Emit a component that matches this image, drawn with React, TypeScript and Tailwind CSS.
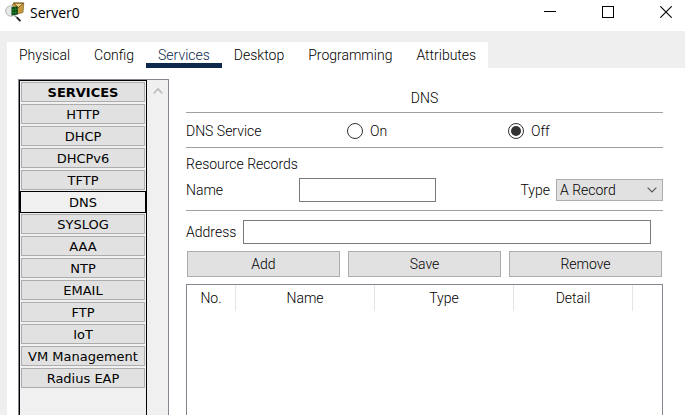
import React from "react";

const tabs = ["Physical", "Config", "Services", "Desktop", "Programming", "Attributes"];

const services = [
  "HTTP", "DHCP", "DHCPv6", "TFTP", "DNS", "SYSLOG", "AAA", "NTP",
  "EMAIL", "FTP", "IoT", "VM Management", "Radius EAP",
];

function AppIcon() {
  return (
    <svg width="20" height="20" viewBox="0 0 20 20" aria-hidden="true">
      <path d="M7 3 L9 0.8 L18.8 1 L18 10.5 L12 12 Z" fill="#c99b3c" stroke="#6e5118" strokeWidth="0.6" />
      <path d="M8.6 1.2 L13.5 5.5 L18.6 1.2 Z" fill="#f0d38a" stroke="#5d430f" strokeWidth="0.8" />
      <circle cx="5.8" cy="9" r="5.2" fill="#e4e8e4" stroke="#b4b8b4" strokeWidth="1" />
      <path d="M6.5 5 L12.8 4.5 V12.5 L6.5 13.5 Z" fill="#0b3d13" />
      <path d="M8.2 5.5 V13 M10.6 5 V12.5 M6.5 8 L12.5 7 M6.5 11 L12.5 10" stroke="#1d8a2b" strokeWidth="0.7" />
      <path d="M9.5 13.5 L12 15.5" stroke="#888" strokeWidth="1.4" />
      <path d="M11.8 15.3 L15.4 19.2" stroke="#222" strokeWidth="1.9" />
    </svg>
  );
}

function TitleBar() {
  return (
    <header className="flex h-[31px] items-start bg-white pl-[5px]">
      <div className="flex h-6 flex-1 items-center gap-[5px]">
        <AppIcon />
        <h1 className="pt-0.5 font-['Open_Sans',sans-serif] text-sm leading-4 font-normal">Server0</h1>
      </div>
      <div className="flex h-6 gap-5">
        <button type="button" aria-label="Minimize" className="flex w-[38px] items-center justify-center">
          <svg width="12" height="12" aria-hidden="true"><path d="M0 5.5H12" stroke="#000" /></svg>
        </button>
        <button type="button" aria-label="Maximize" className="flex w-[38px] items-center justify-center">
          <svg width="12" height="12" aria-hidden="true"><rect x=".5" y=".5" width="11" height="11" fill="none" stroke="#000" /></svg>
        </button>
        <button type="button" aria-label="Close" className="flex w-[38px] items-center justify-center">
          <svg width="12" height="12" aria-hidden="true"><path d="M.3 .3L11.7 11.7M11.7 .3L.3 11.7" stroke="#000" strokeWidth="1.1" /></svg>
        </button>
      </div>
    </header>
  );
}

function TabBar() {
  return (
    <div className="flex bg-[#efefef] pt-[11px]">
      <nav role="tablist" className="flex h-[26px] bg-white">
        {tabs.map((tab) => (
          <button
            key={tab}
            type="button"
            role="tab"
            aria-selected={tab === "Services"}
            className={
              tab === "Services"
                ? "border-b-5 border-[#0d274d] px-3 pt-1 leading-4 text-[#0d274d]"
                : "border-b-5 border-white px-3 pt-1 leading-4"
            }
          >
            {tab}
          </button>
        ))}
      </nav>
    </div>
  );
}

function ServiceList() {
  return (
    <aside className="flex w-[151px] border border-b-0 border-[#828790] bg-[#f0f0f0] font-['DejaVu_Sans',sans-serif] text-[13px] font-normal">
      <div className="flex w-[128px] flex-col border border-b-0 border-black">
        <h2 className="mx-px mt-px h-5 border border-[#adadad] bg-[#e1e1e1] text-center leading-[19px] font-bold">
          SERVICES
        </h2>
        {services.map((name) =>
          name === "DNS" ? (
            <button key={name} type="button" aria-pressed="true" className="mt-px h-[22px] border border-black leading-[22px]">
              {name}
            </button>
          ) : (
            <button
              key={name}
              type="button"
              className="mx-px mt-0.5 h-5 border border-[#adadad] bg-[#e1e1e1] leading-[19px] [[aria-pressed]+&]:mt-px"
            >
              {name}
            </button>
          ),
        )}
      </div>
      <div className="flex flex-1 justify-center pt-[7px]">
        <svg width="10" height="8" aria-hidden="true">
          <path d="M.7 6.5L5 1.8L9.3 6.5" fill="none" stroke="#bfbfbf" strokeWidth="1.8" />
        </svg>
      </div>
    </aside>
  );
}

function Radio({ id, label, checked }: { id: string; label: string; checked?: boolean }) {
  return (
    <div className="flex items-center gap-[7px]">
      <input
        id={id}
        type="radio"
        name="dns-service"
        defaultChecked={checked}
        className="size-4 appearance-none rounded-full border border-[#333] bg-white bg-clip-content p-0.5 checked:bg-[#333]"
      />
      <label htmlFor={id}>{label}</label>
    </div>
  );
}

function DnsPanel() {
  return (
    <main className="mr-[22px] flex min-w-0 flex-1 flex-col">
      <h2 className="h-[34px] border-b border-[#a0a0a0] pt-[11px] text-center leading-4">DNS</h2>
      <div role="radiogroup" aria-labelledby="svc" className="grid h-[35px] grid-cols-3 items-center gap-2 border-b border-[#a0a0a0] pt-px pr-0.5">
        <span id="svc">DNS Service</span>
        <Radio id="on" label="On" />
        <Radio id="off" label="Off" checked />
      </div>
      <div className="border-b border-[#a0a0a0] pb-2">
        <h3 className="pt-2 leading-4">Resource Records</h3>
        <div className="mt-1.5 flex h-6 items-center">
          <label htmlFor="name" className="w-[113px]">Name</label>
          <input id="name" type="text" className="h-6 w-[137px] border border-[#7a7a7a] bg-white px-1 outline-none" />
          <label htmlFor="type" className="mr-1.5 ml-auto">Type</label>
          <div className="grid w-[107px] items-center">
            <select id="type" className="col-start-1 row-start-1 h-[22px] appearance-none border border-[#adadad] bg-[#e1e1e1] pl-[3px] outline-none">
              <option>A Record</option>
              <option>CNAME</option>
              <option>SOA</option>
              <option>NS Record</option>
            </select>
            <svg width="10" height="6" aria-hidden="true" className="pointer-events-none col-start-1 row-start-1 mr-1.5 justify-self-end">
              <path d="M.6 .6L5 5L9.4 .6" fill="none" stroke="#555" strokeWidth="1.1" />
            </svg>
          </div>
        </div>
      </div>
      <div className="mt-[9px] mr-3 flex items-center">
        <label htmlFor="address" className="w-[57px]">Address</label>
        <input id="address" type="text" className="h-6 min-w-0 flex-1 border border-[#7a7a7a] bg-white px-1 outline-none" />
      </div>
      <div className="mt-[7px] grid grid-cols-3 gap-2 px-px">
        {["Add", "Save", "Remove"].map((action) => (
          <button key={action} type="button" className="h-[26px] border border-[#adadad] bg-[#e1e1e1] leading-6">
            {action}
          </button>
        ))}
      </div>
      <div className="mt-[7px] flex-1 border border-b-0 border-[#828790]">
        <table className="w-full table-fixed border-separate border-spacing-0">
          <thead>
            <tr className="h-[26px] *:border-r *:border-[#e5e5e5] *:p-0 *:font-light">
              <th scope="col" className="w-[49px]">No.</th>
              <th scope="col">Name</th>
              <th scope="col">Type</th>
              <th scope="col" className="w-[119px]">Detail</th>
              <td className="w-[29px] border-r-0!" />
            </tr>
          </thead>
        </table>
      </div>
    </main>
  );
}

export default function App() {
  return (
    <div className="flex min-h-screen flex-col bg-white font-[Roboto,sans-serif] text-sm leading-4 font-light text-black">
      <TitleBar />
      <div className="flex flex-1 flex-col border-l-7 border-[#efefef]">
        <TabBar />
        <div className="flex flex-1 gap-[17px] pt-[11px] pl-[11px]">
          <ServiceList />
          <DnsPanel />
        </div>
      </div>
    </div>
  );
}
